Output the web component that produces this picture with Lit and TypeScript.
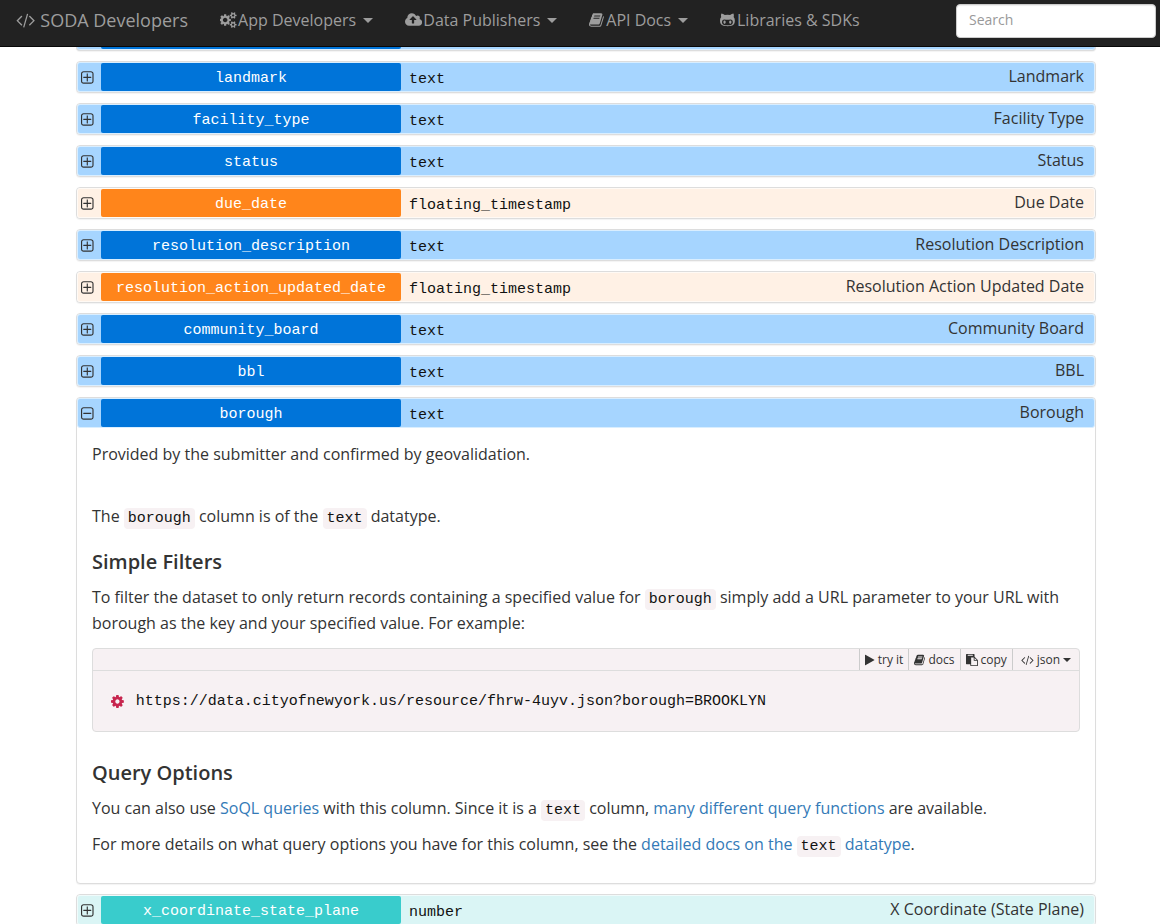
import { LitElement, html, css, svg } from "lit";
import { customElement, property, state } from "lit/decorators.js";
import { classMap } from "lit/directives/class-map.js";

type Icon = { box: string; d: string };

const BOOK =
  "M1703 478q40 57 18 129l-275 906q-19 64-76.5 107.5t-122.5 43.5h-923q-77 0-148.5-53.5t-99.5-131.5q-24-67-2-127 0-4 3-27t4-37q1-8-3-21.5t-3-19.5q2-11 8-21t16.5-23.5 16.5-23.5q23-38 45-91.5t30-91.5q3-10 .5-30t-.5-28q3-11 17-28t17-23q21-36 42-92t25-90q1-9-2.5-32t.5-28q4-13 22-30.5t22-22.5q19-26 42.5-84.5t27.5-96.5q1-8-3-25.5t-2-26.5q2-8 9-18t18-23 17-21q8-12 16.5-30.5t15-35 16-36 19.5-32 26.5-23.5 36-11.5 47.5 5.5l-1 3q38-9 51-9h761q74 0 114 56t18 130l-274 906q-36 119-71.5 153.5t-128.5 34.5h-869q-27 0-38 15-11 16-1 43 24 70 144 70h923q29 0 56-15.5t35-41.5l300-987q7-22 5-57 38 15 59 43zm-1064 2q-4 13 2 22.5t20 9.5h608q13 0 25.5-9.5t16.5-22.5l21-64q4-13-2-22.5t-20-9.5h-608q-13 0-25.5 9.5t-16.5 22.5zm-83 256q-4 13 2 22.5t20 9.5h608q13 0 25.5-9.5t16.5-22.5l21-64q4-13-2-22.5t-20-9.5h-608q-13 0-25.5 9.5t-16.5 22.5z";
const SATELLITE =
  "v140q0 16-149 31-12 27-30 52 51 113 51 138 0 4-4 7-122 71-124 71-8 0-46-47t-52-68q-20 2-30 2t-30-2q-14 21-52 68t-46 47q-2 0-124-71-4-3-4-7 0-25 51-138-18-25-30-52-149-15-149-31v-140q0-16 149-31 13-29 30-52-51-113-51-138 0-4 4-7 4-2 35-20t59-34 30-16q8 0 46 46.5t52 67.5q20-2 30-2t30 2q51-71 92-112l6-2q4 0 124 70 4 3 4 7 0 25-51 138 17 23 30 52 149 15 149 31z";
const SQUARE =
  "M1472 1248v-832q0-66-47-113t-113-47h-832q-66 0-113 47t-47 113v832q0 66 47 113t113 47h832q66 0 113-47t47-113zm128-832v832q0 119-84.5 203.5t-203.5 84.5h-832q-119 0-203.5-84.5t-84.5-203.5v-832q0-119 84.5-203.5t203.5-84.5h832q119 0 203.5 84.5t84.5 203.5z";

const ICONS: Record<string, Icon> = {
  code: {
    box: "0 0 1920 1792",
    d: "M617 1399l-50 50q-10 10-23 10t-23-10l-466-466q-10-10-10-23t10-23l466-466q10-10 23-10t23 10l50 50q10 10 10 23t-10 23l-393 393 393 393q10 10 10 23t-10 23zm591-1067l-373 1291q-4 13-15.5 19.5t-23.5 2.5l-62-17q-13-4-19.5-15.5t-2.5-24.5l373-1291q4-13 15.5-19.5t23.5-2.5l62 17q13 4 19.5 15.5t2.5 24.5zm657 651l-466 466q-10 10-23 10t-23-10l-50-50q-10-10-10-23t10-23l393-393-393-393q-10-10-10-23t10-23l50-50q10-10 23-10t23 10l466 466q10 10 10 23t-10 23z",
  },
  cogs: {
    box: "0 0 1920 1792",
    d:
      "M832 896q0-106-75-181t-181-75-181 75-75 181 75 181 181 75 181-75 75-181zm768 512q0-52-38-90t-90-38-90 38-38 90q0 53 37.5 90.5t90.5 37.5 90.5-37.5 37.5-90.5zm0-1024q0-52-38-90t-90-38-90 38-38 90q0 53 37.5 90.5t90.5 37.5 90.5-37.5 37.5-90.5zm-384 421v185q0 10-7 19.5t-16 10.5l-155 24q-11 35-32 76 34 48 90 115 7 11 7 20 0 12-7 19-23 30-82.5 89.5t-78.5 59.5q-11 0-21-7l-115-90q-37 19-77 31-11 108-23 155-7 24-30 24h-186q-11 0-20-7.5t-10-17.5l-23-153q-34-10-75-31l-118 89q-7 7-20 7-11 0-21-8-144-133-144-160 0-9 7-19 10-14 41-53t47-61q-23-44-35-82l-152-24q-10-1-17-9.5t-7-19.5v-185q0-10 7-19.5t16-10.5l155-24q11-35 32-76-34-48-90-115-7-11-7-20 0-12 7-20 22-30 82-89t79-59q11 0 21 7l115 90q34-18 77-32 11-108 23-154 7-24 30-24h186q11 0 20 7.5t10 17.5l23 153q34 10 75 31l118-89q8-7 20-7 11 0 21 8 144 133 144 160 0 8-7 19-12 16-42 54t-45 60q23 48 34 82l152 23q10 2 17 10.5t7 19.5zm640 533" +
      SATELLITE +
      "m0-1024" +
      SATELLITE,
  },
  upload: {
    box: "-64 0 1920 1792",
    d: "M1216 864q0-14-9-23l-352-352q-9-9-23-9t-23 9l-351 351q-10 12-10 24 0 14 9 23t23 9h224v352q0 13 9.5 22.5t22.5 9.5h192q13 0 22.5-9.5t9.5-22.5v-352h224q13 0 22.5-9.5t9.5-22.5zm640 288q0 159-112.5 271.5t-271.5 112.5h-1088q-185 0-316.5-131.5t-131.5-316.5q0-130 70-240t188-165q-2-30-2-43 0-212 150-362t362-150q156 0 285.5 87t188.5 231q71-62 166-62 106 0 181 75t75 181q0 76-41 138 130 31 213.5 135.5t83.5 238.5z",
  },
  book: { box: "64 0 1664 1792", d: BOOK },
  github: {
    box: "0 0 1664 1792",
    d: "M640 1136q0 40-12.5 82t-43 76-72.5 34-72.5-34-43-76-12.5-82 12.5-82 43-76 72.5-34 72.5 34 43 76 12.5 82zm640 0q0 40-12.5 82t-43 76-72.5 34-72.5-34-43-76-12.5-82 12.5-82 43-76 72.5-34 72.5 34 43 76 12.5 82zm160 0q0-120-69-204t-187-84q-41 0-195 21-71 11-157 11t-157-11q-152-21-195-21-118 0-187 84t-69 204q0 88 32 153.5t81 103 122 60 140 29.5 149 7h168q82 0 149-7t140-29.5 122-60 81-103 32-153.5zm224-176q0 207-61 331-38 77-105.5 133t-141 86-170 47.5-171.5 22-167 4.5q-78 0-142-3t-147.5-12.5-152.5-30-137-51.5-121-81-86-115q-62-123-62-331 0-237 136-396-27-82-27-170 0-116 51-218 108 0 190 39.5t189 123.5q147-35 309-35 148 0 280 32 105-82 187-121t189-39q51 102 51 218 0 87-27 168 136 160 136 398z",
  },
  play: {
    box: "192 0 1408 1792",
    d: "M1576 927l-1328 738q-23 13-39.5 3t-16.5-36v-1472q0-26 16.5-36t39.5 3l1328 738q23 13 23 31t-23 31z",
  },
  paste: {
    box: "0 0 1792 1792",
    d: "M768 1664h896v-640h-416q-40 0-68-28t-28-68v-416h-384v1152zm256-1440v-64q0-13-9.5-22.5t-22.5-9.5h-704q-13 0-22.5 9.5t-9.5 22.5v64q0 13 9.5 22.5t22.5 9.5h704q13 0 22.5-9.5t9.5-22.5zm256 672h299l-299-299v299zm512 128v672q0 40-28 68t-68 28h-960q-40 0-68-28t-28-68v-160h-544q-40 0-68-28t-28-68v-1344q0-40 28-68t68-28h1088q40 0 68 28t28 68v328q21 13 36 28l408 408q28 28 48 76t20 88z",
  },
  cog: {
    box: "128 0 1536 1792",
    d: "M1152 896q0-106-75-181t-181-75-181 75-75 181 75 181 181 75 181-75 75-181zm512-109v222q0 12-8 23t-20 13l-185 28q-19 54-39 91 35 50 107 138 10 12 10 25t-9 23q-27 37-99 108t-94 71q-12 0-26-9l-138-108q-44 23-91 38-16 136-29 186-7 28-36 28h-222q-14 0-24.5-8.5t-11.5-21.5l-28-184q-49-16-90-37l-141 107q-10 9-25 9-14 0-25-11-126-114-165-168-7-10-7-23 0-12 8-23 15-21 51-66.5t54-70.5q-27-50-41-99l-183-27q-13-2-21-12.5t-8-23.5v-222q0-12 8-23t19-13l186-28q14-46 39-92-40-57-107-138-10-12-10-24 0-10 9-23 26-36 98.5-107.5t94.5-71.5q13 0 26 10l138 107q44-23 91-38 16-136 29-186 7-28 36-28h222q14 0 24.5 8.5t11.5 21.5l28 184q49 16 90 37l142-107q9-9 24-9 13 0 25 10 129 119 165 170 7 8 7 22 0 12-8 23-15 21-51 66.5t-54 70.5q26 50 41 98l183 28q13 2 21 12.5t8 23.5z",
  },
  plus: {
    box: "192 0 1408 1792",
    d:
      "M1344 800v64q0 14-9 23t-23 9h-352v352q0 14-9 23t-23 9h-64q-14 0-23-9t-9-23v-352h-352q-14 0-23-9t-9-23v-64q0-14 9-23t23-9h352v-352q0-14 9-23t23-9h64q14 0 23 9t9 23v352h352q14 0 23 9t9 23z" +
      SQUARE,
  },
  minus: {
    box: "192 0 1408 1792",
    d: "M1344 800v64q0 14-9 23t-23 9h-832q-14 0-23-9t-9-23v-64q0-14 9-23t23-9h832q14 0 23 9t9 23z" + SQUARE,
  },
};

const icon = (name: string) => html`<svg class="icon ${name}" viewBox=${ICONS[name].box} aria-hidden="true">
  ${svg`<path d=${ICONS[name].d} fill="currentColor"></path>`}
</svg>`;

type Field = { field: string; type: string; name: string; open?: boolean };

const FIELDS: Field[] = [
  { field: "landmark", type: "text", name: "Landmark" },
  { field: "facility_type", type: "text", name: "Facility Type" },
  { field: "status", type: "text", name: "Status" },
  { field: "due_date", type: "floating_timestamp", name: "Due Date" },
  { field: "resolution_description", type: "text", name: "Resolution Description" },
  { field: "resolution_action_updated_date", type: "floating_timestamp", name: "Resolution Action Updated Date" },
  { field: "community_board", type: "text", name: "Community Board" },
  { field: "bbl", type: "text", name: "BBL" },
  { field: "borough", type: "text", name: "Borough", open: true },
  { field: "x_coordinate_state_plane", type: "number", name: "X Coordinate (State Plane)" },
];

@customElement("site-nav")
class SiteNav extends LitElement {
  static styles = css`
    :host {
      display: block;
      background: #222;
      border-bottom: 1px solid #080808;
    }
    nav {
      display: flex;
      align-items: flex-start;
      padding: 4px 4px 8px 0;
    }
    a {
      display: flex;
      align-items: center;
      padding: 0 15px;
      height: 32px;
      color: #9d9d9d;
      text-decoration: none;
      white-space: nowrap;
    }
    .brand {
      padding: 0 17px 0 16px;
      font-size: 18px;
      gap: 5px;
    }
    .links {
      display: flex;
      flex: 1;
      gap: 2px;
      list-style: none;
      margin: 0;
      padding: 0;
    }
    .icon {
      height: 16px;
      flex: none;
    }
    .brand .icon {
      height: 18px;
    }
    .links .icon {
      margin-right: 1px;
    }
    .links .book,
    .links .github {
      margin-right: 2px;
    }
    .caret {
      margin-left: 7px;
      border: 5px solid transparent;
      border-top-color: currentColor;
      border-bottom: 0;
    }
    input {
      box-sizing: border-box;
      width: 200px;
      height: 34px;
      padding: 3px 12px 6px;
      border: 1px solid #ccc;
      border-radius: 4px;
      box-shadow: inset 0 1px 1px rgba(0, 0, 0, 0.08);
      font: 14px "Open Sans", sans-serif;
      color: #555;
      background: #fff;
    }
    input::placeholder {
      color: #999;
      opacity: 1;
    }
  `;
  private link(glyph: string, label: string, menu: boolean) {
    return html`<li><a href="#">${icon(glyph)}<span>${label}</span>${menu ? html`<span class="caret"></span>` : ""}</a></li>`;
  }
  render() {
    return html`<nav>
      <a class="brand" href="#">${icon("code")}<span>SODA Developers</span></a>
      <ul class="links">
        ${this.link("cogs", "App Developers", true)} ${this.link("upload", "Data Publishers", true)}
        ${this.link("book", "API Docs", true)} ${this.link("github", "Libraries & SDKs", false)}
      </ul>
      <input type="search" placeholder="Search" aria-label="Search" />
    </nav>`;
  }
}

@customElement("code-sample")
class CodeSample extends LitElement {
  static styles = css`
    :host {
      display: block;
      background: #f7f1f3;
      border: 1px solid #ddd;
      border-radius: 4px;
      margin-top: 12px;
    }
    .bar {
      display: flex;
      justify-content: flex-end;
      border-bottom: 1px solid #ddd;
    }
    button {
      display: flex;
      align-items: center;
      gap: 3px;
      height: 21px;
      padding: 0 5px;
      border: 0;
      border-left: 1px solid #ccc;
      background: none;
      color: #333;
      font: 12px "Open Sans", sans-serif;
    }
    .format {
      padding: 0 8px;
    }
    .icon {
      height: 12px;
    }
    .caret {
      border: 4px solid transparent;
      border-top-color: currentColor;
      border-bottom: 0;
    }
    .url {
      display: flex;
      align-items: center;
      gap: 12px;
      height: 60px;
      padding-left: 18px;
      font: 15px/22px "Liberation Mono", monospace;
      color: #111;
    }
    .url a {
      color: inherit;
      text-decoration: none;
      padding-top: 2px;
    }
    .url .icon {
      height: 15px;
      color: #c7254e;
    }
  `;
  @property() url = "";
  render() {
    return html`<div class="bar">
        <button>${icon("play")}<span>try it</span></button>
        <button>${icon("book")}<span>docs</span></button>
        <button>${icon("paste")}<span>copy</span></button>
        <button class="format">${icon("code")}<span>json</span><span class="caret"></span></button>
      </div>
      <div class="url">${icon("cog")}<a href=${this.url}>${this.url}</a></div>`;
  }
}

@customElement("field-panel")
class FieldPanel extends LitElement {
  static styles = css`
    :host {
      display: block;
      border: 1px solid #ddd;
      border-radius: 4px;
      background: #fff;
      box-shadow: 0 1px 1px rgba(0, 0, 0, 0.05);
    }
    .head {
      display: flex;
      height: 28px;
      border: 1px solid;
      border-radius: 3px;
    }
    .text {
      background: #a6d5ff;
      border-color: #d9eeff;
    }
    .floating_timestamp {
      background: #fff1e5;
      border-color: #fffaf5;
    }
    .number {
      background: #daf5f5;
      border-color: #f0fbfb;
    }
    .toggle {
      display: flex;
      align-items: center;
      width: 23px;
      padding: 2px 0 0 3px;
      border: 0;
      background: none;
      color: #333;
    }
    .toggle .icon {
      height: 16px;
    }
    .field {
      width: 300px;
      border-radius: 2px;
      background: #0074d9;
      color: #fff;
      font: 15px/31px "Liberation Mono", monospace;
      text-align: center;
      text-decoration: none;
    }
    .floating_timestamp .field {
      background: #ff851b;
    }
    .number .field {
      background: #39cccc;
    }
    .type {
      padding-left: 8px;
      color: #111;
      font: 15px/33px "Liberation Mono", monospace;
    }
    .name {
      margin-left: auto;
      padding-right: 10px;
      line-height: 26px;
    }
    .body {
      padding: 13px 15px 26px;
    }
    p {
      margin: 0 0 10px;
      min-height: 26px;
    }
    .gap {
      margin-bottom: 36px;
    }
    h4 {
      margin: 22px 0 11px;
      font-size: 20px;
      font-weight: 600;
      line-height: 22px;
    }
    p:last-child {
      margin: 0;
    }
    .lead {
      margin-bottom: 0;
    }
    .after-code {
      margin-top: 30px;
    }
    code {
      padding: 2px 4px;
      border-radius: 4px;
      background: #f7f1f3;
      color: #111;
      font: 15px "Liberation Mono", monospace;
    }
    a {
      color: #337ab7;
      text-decoration: none;
    }
  `;
  @property({ attribute: false }) data!: Field;
  @state() private open = false;

  willUpdate(changed: Map<string, unknown>) {
    if (changed.has("data")) this.open = !!this.data.open;
  }

  private details() {
    const { field, type } = this.data;
    return html`<div class="body">
      <p class="gap">Provided by the submitter and confirmed by geovalidation.</p>
      <p>The <code>${field}</code> column is of the <code>${type}</code> datatype.</p>
      <h4>Simple Filters</h4>
      <p class="lead">To filter the dataset to only return records containing a specified value for <code>${field}</code> simply add a URL parameter to your URL with ${field} as the key and your specified value. For example:</p>
      <code-sample url="https://data.cityofnewyork.us/resource/fhrw-4uyv.json?borough=BROOKLYN"></code-sample>
      <h4 class="after-code">Query Options</h4>
      <p>You can also use <a href="#">SoQL queries</a> with this column. Since it is a <code>${type}</code> column, <a href="#">many different query functions</a> are available.</p>
      <p>For more details on what query options you have for this column, see the <a href="#">detailed docs on the <code>${type}</code> datatype</a>.</p>
    </div>`;
  }

  render() {
    const { field, type, name } = this.data;
    return html`<div class=${classMap({ head: true, [type]: true })}>
        <button
          class="toggle"
          aria-expanded=${this.open ? "true" : "false"}
          aria-label="Details of ${field}"
          @click=${() => (this.open = !this.open)}
        >
          ${icon(this.open ? "minus" : "plus")}
        </button>
        <a class="field" href="#${field}">${field}</a>
        <span class="type">${type}</span>
        <span class="name">${name}</span>
      </div>
      ${this.open ? this.details() : ""}`;
  }
}

@customElement("app-root")
class AppRoot extends LitElement {
  static styles = css`
    :host {
      display: block;
      height: 100vh;
      overflow: hidden;
      background: #fff;
      color: #333;
      font: 16px/26px "Open Sans", sans-serif;
    }
    main {
      display: flex;
      flex-direction: column;
      gap: 10px;
      padding: 0 64px 20px 76px;
    }
    /* Bottom edge of the row that is scrolled under the bar */
    .edge {
      height: 2px;
      padding-left: 24px;
      border: 1px solid #ddd;
      border-top: 0;
      border-radius: 0 0 4px 4px;
      background: #a6d5ff;
      box-shadow: inset 0 -1px #d9eeff, 0 1px 1px rgba(0, 0, 0, 0.05);
      padding-bottom: 1px;
    }
    .edge-fill {
      width: 300px;
      height: 2px;
      border-radius: 0 0 2px 2px;
      background: #0074d9;
    }
  `;
  render() {
    return html`<site-nav></site-nav>
      <main>
        <div class="edge"><div class="edge-fill"></div></div>
        ${FIELDS.map((f) => html`<field-panel .data=${f}></field-panel>`)}
      </main>`;
  }
}
